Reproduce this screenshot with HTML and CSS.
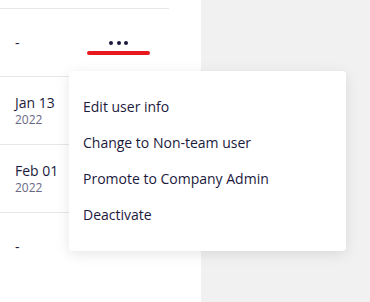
FILE: index.html
```html
<!DOCTYPE html>
<html lang="en">
<head>
    <meta charset="UTF-8">
    <meta name="viewport" content="width=device-width, initial-scale=1.0">
    <title>Users</title>
    <link rel="stylesheet" href="styles.css">
</head>
<body>
    <div id="page">
        <div id="user-panel">
            <div id="user-table">
                <div class="user-row">
                    <div class="date-cell">-</div>
                    <div class="action-cell">
                        <span class="dots">
                            <span class="dot"></span>
                            <span class="dot"></span>
                            <span class="dot"></span>
                        </span>
                        <span class="highlight-bar"></span>
                    </div>
                </div>
                <div class="user-row">
                    <div class="date-cell">
                        <div class="date-main">Jan 13</div>
                        <div class="date-year">2022</div>
                    </div>
                </div>
                <div class="user-row">
                    <div class="date-cell">
                        <div class="date-main">Feb 01</div>
                        <div class="date-year">2022</div>
                    </div>
                </div>
                <div class="user-row last-row">
                    <div class="date-cell">-</div>
                </div>
            </div>
        </div>
        <div id="side-area"></div>

        <!-- context menu opened from the ••• button -->
        <div id="action-menu">
            <div class="menu-item">Edit user info</div>
            <div class="menu-item">Change to Non-team user</div>
            <div class="menu-item">Promote to Company Admin</div>
            <div class="menu-item">Deactivate</div>
        </div>
    </div>
</body>
</html>
```

FILE: styles.css
```css
body {
    font-family: "Open Sans", Arial, sans-serif;
    margin: 0;
    padding: 0;
    color: #1b1a3d;
    background-color: #f1f1f1;
}

#page {
    position: relative;
    display: flex;
    flex-direction: row;
    height: 302px;
    overflow: hidden;
}

#user-panel {
    width: 201px;
    background-color: #fff;
    padding-top: 8px;
}

#side-area {
    flex: 1;
    background-color: #f1f1f1;
}

#user-table {
    width: 169px;
    border-top: 1px solid #e6e6ea;
}

.user-row {
    display: flex;
    align-items: center;
    height: 67px;
    border-bottom: 1px solid #e6e6ea;
}

.last-row {
    border-bottom: none;
}

.date-cell {
    width: 72px;
    padding-left: 15px;
    font-size: 14px;
    line-height: 18px;
}

.date-main {
    font-size: 14px;
    line-height: 18px;
}

.date-year {
    font-size: 12px;
    line-height: 16px;
    color: #6a6886;
}

.action-cell {
    width: 63px;
    display: flex;
    flex-direction: column;
    align-items: center;
    margin-top: 10px;
}

.dots {
    display: flex;
    gap: 3.5px;
}

.dot {
    width: 4px;
    height: 4px;
    border-radius: 50%;
    background-color: #1b1a3d;
}

.highlight-bar {
    display: block;
    width: 63px;
    height: 4px;
    margin-top: 6px;
    border-radius: 2px;
    background-color: #e8191e;
}

#action-menu {
    position: absolute;
    left: 69px;
    top: 71px;
    width: 277px;
    padding: 18px 0;
    background-color: #fff;
    border-radius: 4px;
    box-shadow: 0 3px 14px rgba(0, 0, 0, 0.1);
}

.menu-item {
    height: 36px;
    line-height: 36px;
    padding-left: 14px;
    font-size: 14px;
    color: #1b1a3d;
}
```
